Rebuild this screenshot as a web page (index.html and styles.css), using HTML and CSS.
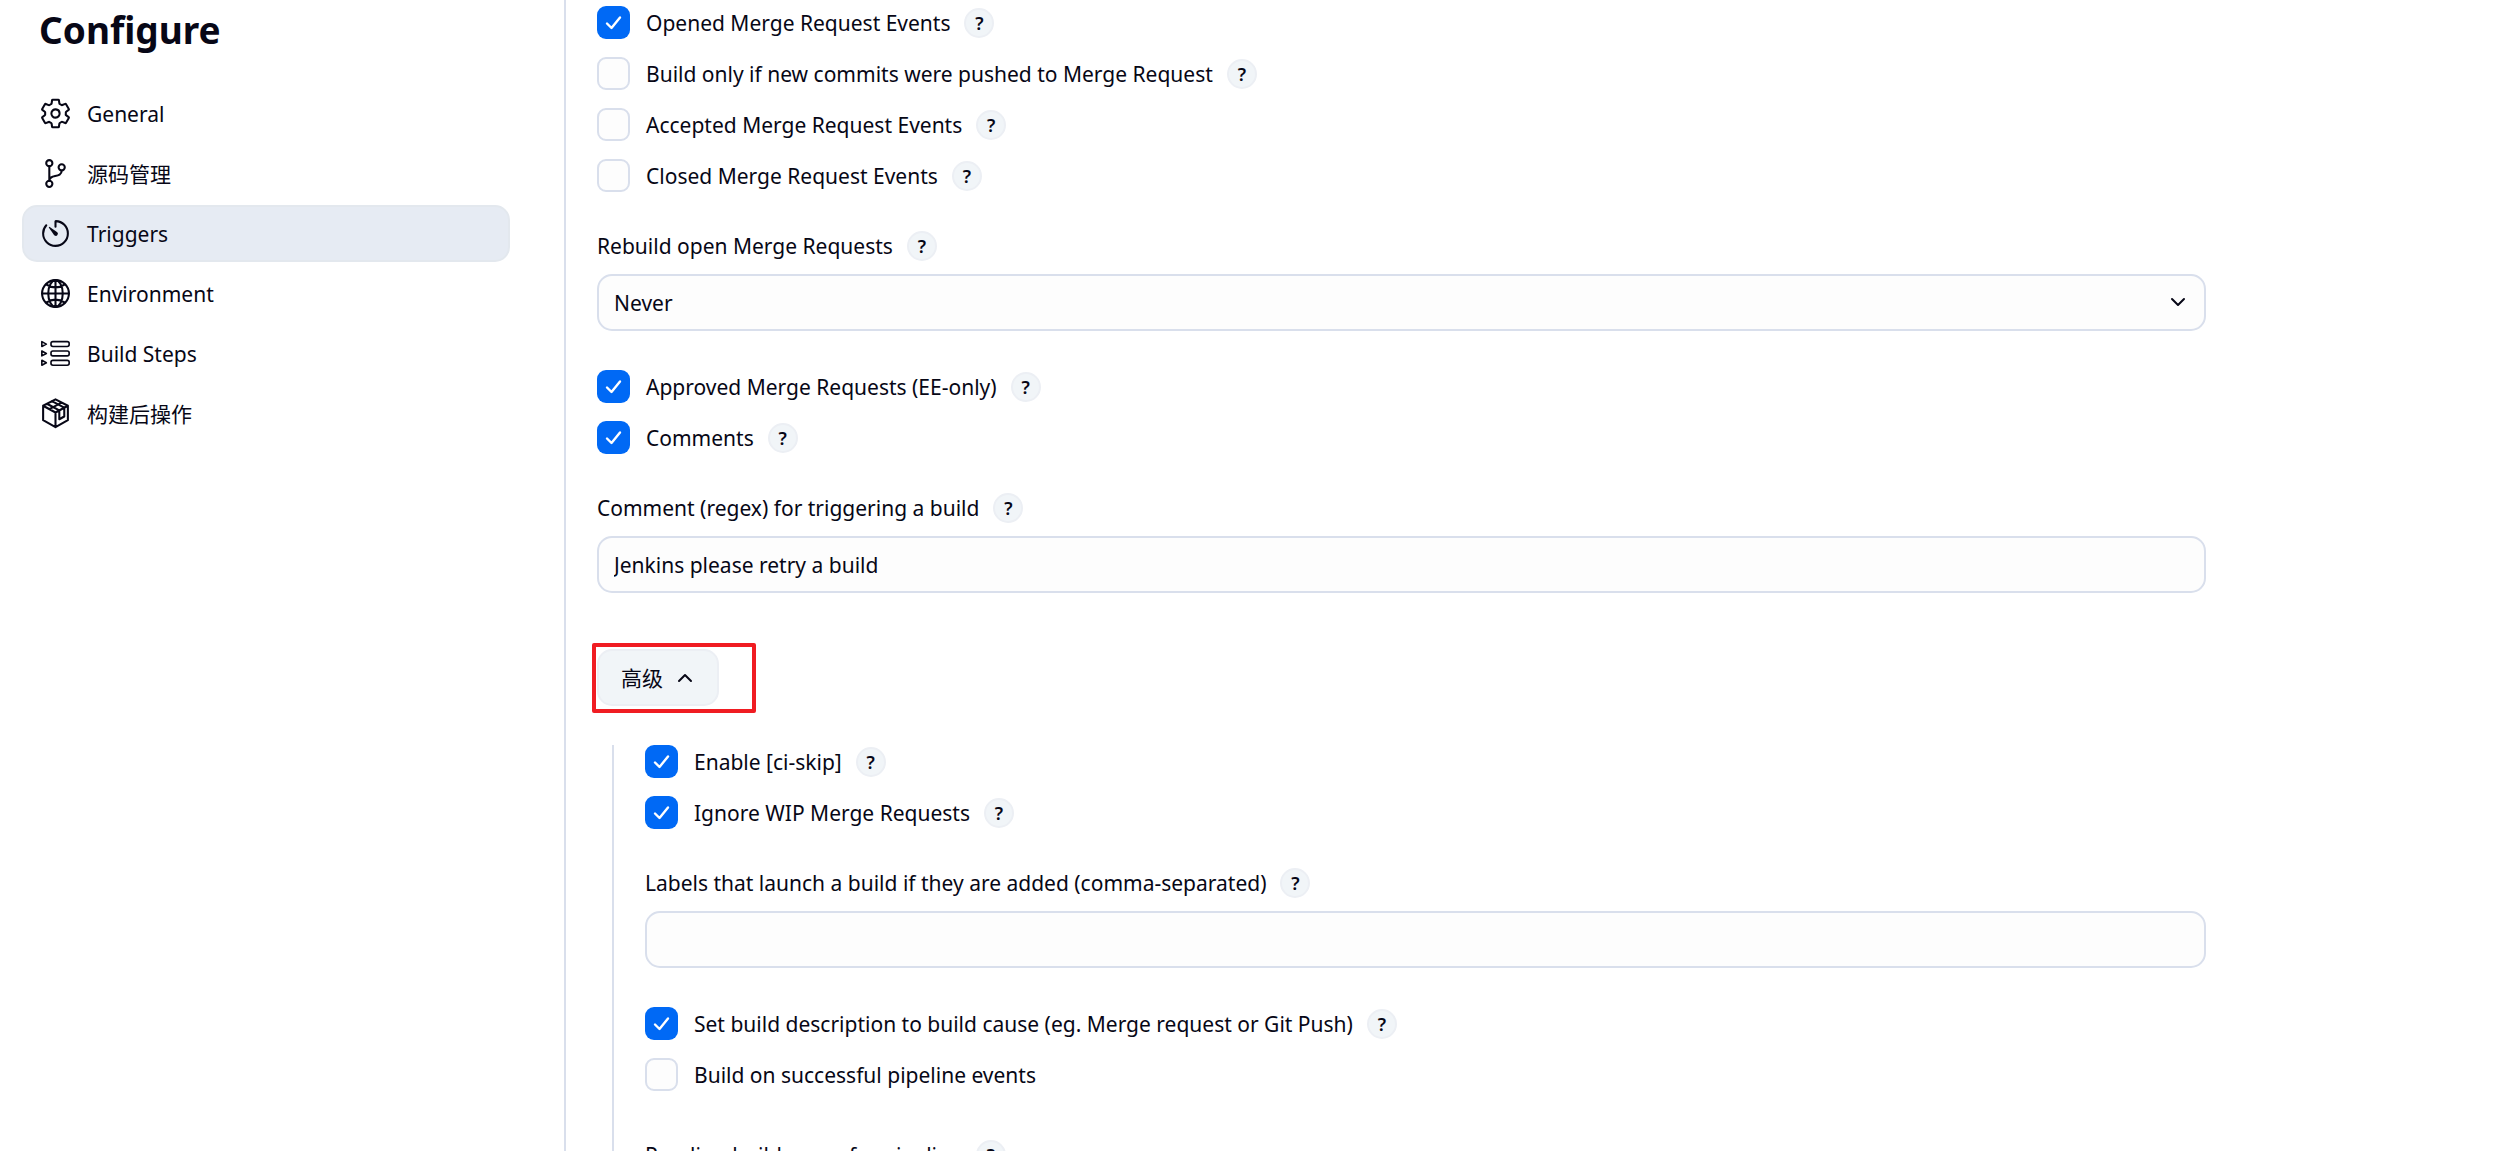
FILE: index.html
```html
<!DOCTYPE html>
<html lang="zh-CN">
<head>
    <meta charset="UTF-8">
    <meta name="viewport" content="width=device-width, initial-scale=1.0">
    <title>Configure</title>
    <link rel="stylesheet" href="styles.css">
</head>
<body>
    <div class="page">
        <aside class="side">
            <h1>Configure</h1>
            <nav class="menu">
                <a href="#general">
                    <svg class="icon" viewBox="0 0 512 512"><path d="M262.29 192.31a64 64 0 1057.4 57.4 64.13 64.13 0 00-57.4-57.4zM416.39 256a154.34 154.34 0 01-1.53 20.79l45.21 35.46a10.81 10.81 0 012.45 13.75l-42.77 74a10.81 10.81 0 01-13.14 4.59l-44.9-18.08a16.11 16.11 0 00-15.17 1.75A164.48 164.48 0 01325 400.8a15.94 15.94 0 00-8.82 12.14l-6.73 47.89a11.08 11.08 0 01-10.68 9.17h-85.54a11.11 11.11 0 01-10.69-8.87l-6.72-47.82a16.07 16.07 0 00-9-12.22 155.3 155.3 0 01-21.46-12.57 16 16 0 00-15.11-1.71l-44.89 18.07a10.81 10.81 0 01-13.14-4.58l-42.77-74a10.8 10.8 0 012.45-13.75l38.21-30a16.05 16.05 0 006-14.08c-.36-4.17-.58-8.33-.58-12.5s.21-8.27.58-12.35a16 16 0 00-6.07-13.94l-38.19-30A10.81 10.81 0 0149.48 186l42.77-74a10.81 10.81 0 0113.14-4.59l44.9 18.08a16.11 16.11 0 0015.17-1.75A164.48 164.48 0 01187 111.2a15.94 15.94 0 008.82-12.14l6.73-47.89A11.08 11.08 0 01213.23 42h85.54a11.11 11.11 0 0110.69 8.87l6.72 47.82a16.07 16.07 0 009 12.22 155.3 155.3 0 0121.46 12.57 16 16 0 0015.11 1.71l44.89-18.07a10.81 10.81 0 0113.14 4.58l42.77 74a10.8 10.8 0 01-2.45 13.75l-38.21 30a16.05 16.05 0 00-6.05 14.08c.33 4.14.55 8.3.55 12.47z"/></svg>
                    General
                </a>
                <a href="#scm">
                    <svg class="icon" viewBox="0 0 512 512"><circle cx="160" cy="96" r="48"/><circle cx="160" cy="416" r="48"/><circle cx="352" cy="160" r="48"/><path d="M160 368V144M352 208c0 128-192 48-192 160"/></svg>
                    源码管理
                </a>
                <a href="#triggers" class="on">
                    <svg class="icon" viewBox="0 0 512 512"><path d="M112.91 128A191.85 191.85 0 0064 254c-1.18 106.35 85.65 193.8 192 194 106.2.2 192-85.83 192-192 0-104.54-83.55-189.61-187.5-192a4.36 4.36 0 00-4.5 4.37V152"/><path class="solid" d="M233.38 278.63l-79-113a8.13 8.13 0 0111.32-11.32l113 79a32.5 32.5 0 01-37.25 53.26 33.21 33.21 0 01-8.07-7.94z"/></svg>
                    Triggers
                </a>
                <a href="#environment">
                    <svg class="icon" viewBox="0 0 512 512"><circle cx="256" cy="256" r="208"/><path d="M256 48c-58.07 0-112.67 93.13-112.67 208S197.93 464 256 464s112.67-93.13 112.67-208S314.07 48 256 48zM117.33 117.33c38.24 27.15 86.38 43.34 138.67 43.34s100.43-16.19 138.67-43.34M394.67 394.67c-38.24-27.15-86.38-43.34-138.67-43.34s-100.43 16.19-138.67 43.34M256 48v416M464 256H48"/></svg>
                    Environment
                </a>
                <a href="#build-steps">
                    <svg class="icon thin" viewBox="0 0 512 512"><path d="M44 72v76l70-38zM44 217v76l70-38zM44 362v76l70-38z"/><rect x="186" y="72" width="282" height="76" rx="30"/><rect x="186" y="217" width="282" height="76" rx="30"/><rect x="186" y="362" width="282" height="76" rx="30"/></svg>
                    Build Steps
                </a>
                <a href="#post-build">
                    <svg class="icon" viewBox="0 0 512 512"><path d="M256 36L448 136V360L256 468L64 360V136zM64 136L256 240L448 136M256 240V468M160 188L352 86M123 105L315 208V345L392 303V166L200 65"/></svg>
                    构建后操作
                </a>
            </nav>
        </aside>

        <main class="main">
            <div class="checks">
                <div class="row"><input type="checkbox" id="opened" checked><label for="opened">Opened Merge Request Events</label><button class="help">?</button></div>
                <div class="row"><input type="checkbox" id="commits"><label for="commits">Build only if new commits were pushed to Merge Request</label><button class="help">?</button></div>
                <div class="row"><input type="checkbox" id="accepted"><label for="accepted">Accepted Merge Request Events</label><button class="help">?</button></div>
                <div class="row"><input type="checkbox" id="closed"><label for="closed">Closed Merge Request Events</label><button class="help">?</button></div>
            </div>

            <div class="field">
                <div class="row"><label for="rebuild">Rebuild open Merge Requests</label><button class="help">?</button></div>
                <div class="select">
                    <select id="rebuild">
                        <option>Never</option>
                        <option>On push to source branch</option>
                        <option>On push to source or target branch</option>
                    </select>
                    <svg class="arrow" viewBox="0 0 20 20"><path d="M4 7l6 6 6-6"/></svg>
                </div>
            </div>

            <div class="checks">
                <div class="row"><input type="checkbox" id="approved" checked><label for="approved">Approved Merge Requests (EE-only)</label><button class="help">?</button></div>
                <div class="row"><input type="checkbox" id="comments" checked><label for="comments">Comments</label><button class="help">?</button></div>
            </div>

            <div class="field">
                <div class="row"><label for="regex">Comment (regex) for triggering a build</label><button class="help">?</button></div>
                <input type="text" id="regex" value="Jenkins please retry a build">
            </div>

            <div class="mark">
                <button class="advanced">高级 <svg class="arrow" viewBox="0 0 20 20"><path d="M4 13l6-6 6 6"/></svg></button>
            </div>

            <div class="nested">
                <div class="checks">
                    <div class="row"><input type="checkbox" id="skip" checked><label for="skip">Enable [ci-skip]</label><button class="help">?</button></div>
                    <div class="row"><input type="checkbox" id="wip" checked><label for="wip">Ignore WIP Merge Requests</label><button class="help">?</button></div>
                </div>

                <div class="field">
                    <div class="row"><label for="labels">Labels that launch a build if they are added (comma-separated)</label><button class="help">?</button></div>
                    <input type="text" id="labels">
                </div>

                <div class="checks">
                    <div class="row"><input type="checkbox" id="desc" checked><label for="desc">Set build description to build cause (eg. Merge request or Git Push)</label><button class="help">?</button></div>
                    <div class="row"><input type="checkbox" id="pipeline"><label for="pipeline">Build on successful pipeline events</label></div>
                </div>

                <div class="field pending">
                    <div class="row"><label for="pending">Pending build name for pipeline</label><button class="help">?</button></div>
                    <input type="text" id="pending">
                </div>
            </div>
        </main>
    </div>
</body>
</html>
```

FILE: styles.css
```css
* {
    box-sizing: border-box;
}
body {
    margin: 0;
    height: 100vh;
    overflow: hidden;
    background: #fff;
    color: #070716;
    font: 21px/32px "Noto Sans", "Noto Sans CJK SC", sans-serif;
}
button, input, select {
    font: inherit;
    color: inherit;
}
.page {
    display: flex;
    min-height: 100vh;
}

/* 左侧菜单 */
.side {
    flex: none;
    width: 566px;
    padding: 0 54px 0 22px;
    border-right: 2px solid #d9dfec;
}
.side h1 {
    margin: 0 0 25px;
    padding: 0 17px;
    font-size: 37px;
    line-height: 60px;
}
.menu {
    display: flex;
    flex-direction: column;
    gap: 3px;
}
.menu a {
    display: flex;
    align-items: center;
    gap: 15px;
    height: 57px;
    padding: 0 15px;
    border: 2px solid transparent;
    border-radius: 15px;
    color: inherit;
    text-decoration: none;
}
.menu a.on {
    background: #e6ebf3;
    border-color: #e3e8ee;
}
.icon {
    width: 33px;
    height: 33px;
    fill: none;
    stroke: currentColor;
    stroke-width: 32;
    stroke-linecap: round;
    stroke-linejoin: round;
}
.icon.thin {
    stroke-width: 25;
}
.icon .solid {
    fill: currentColor;
    stroke: none;
}

/* 右侧表单 */
.main {
    flex: 1;
    max-width: 1640px;
    padding: 6px 0 0 31px;
}
.checks {
    display: flex;
    flex-direction: column;
    gap: 18px;
}
.row {
    display: flex;
    align-items: center;
    height: 33px;
}
input[type=checkbox] {
    appearance: none;
    width: 33px;
    height: 33px;
    margin: 0 16px 0 0;
    border: 2px solid #d9dfec;
    border-radius: 9px;
    background: #fdfdfd;
}
input[type=checkbox]:checked {
    border: 0;
    background: #0069f5 url("data:image/svg+xml,%3Csvg xmlns='http://www.w3.org/2000/svg' viewBox='0 0 33 33'%3E%3Cpath d='M10 17.5l4.5 4.5L23 11.5' fill='none' stroke='%23fff' stroke-width='2.4' stroke-linecap='round' stroke-linejoin='round'/%3E%3C/svg%3E");
}
.help {
    width: 30px;
    height: 30px;
    margin-left: 14px;
    padding: 0;
    border: 2px solid #eceff4;
    border-radius: 50%;
    background: #f1f5f8;
    font-size: 18px;
    font-weight: 600;
    line-height: 26px;
}
.field {
    margin: 37px 0 39px;
}
.field.pending {
    margin-top: 47px;
}
.field .row {
    margin-bottom: 12px;
}
input[type=text], select {
    display: block;
    width: 100%;
    height: 57px;
    padding: 0 15px;
    border: 2px solid #d9dfec;
    border-radius: 15px;
    background: #fdfdfd;
    appearance: none;
}
.select {
    position: relative;
}
.arrow {
    width: 20px;
    height: 20px;
    fill: none;
    stroke: currentColor;
    stroke-width: 2;
    stroke-linecap: round;
    stroke-linejoin: round;
}
.select .arrow {
    position: absolute;
    top: 18px;
    right: 18px;
    pointer-events: none;
}
.mark {
    width: 164px;
    height: 70px;
    margin: 50px 0 32px -5px;
    padding: 2px 1px;
    border: 4px solid #f01c22;
    border-radius: 2px;
}
.advanced {
    display: flex;
    align-items: center;
    gap: 12px;
    height: 57px;
    padding: 0 22px;
    border: 2px solid #eceff4;
    border-radius: 15px;
    background: #f1f5f8;
}
.nested {
    margin-left: 15px;
    padding-left: 31px;
    border-left: 2px solid #d9dfec;
}
```
